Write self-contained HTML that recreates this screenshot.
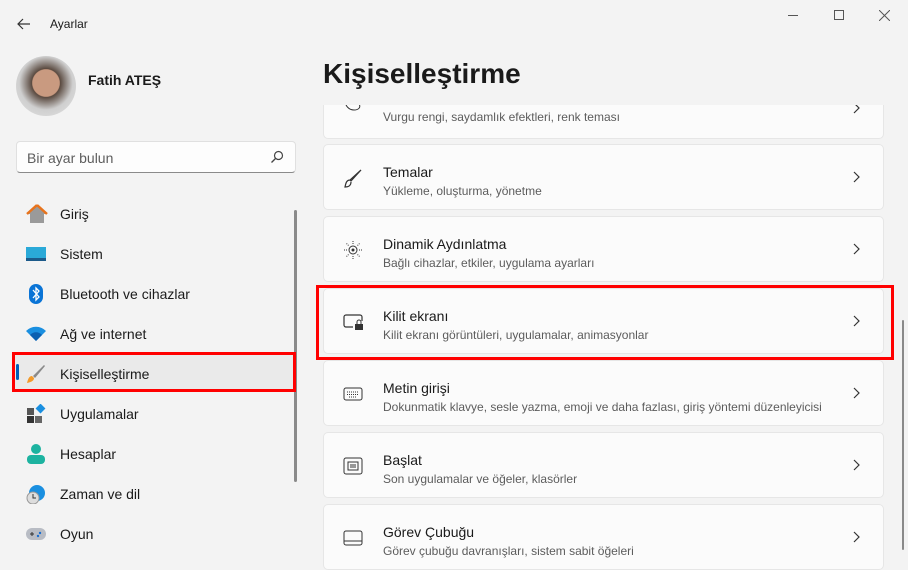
<!DOCTYPE html><html><head><meta charset="utf-8"><style>
*{box-sizing:border-box;margin:0;padding:0}
body{width:908px;height:568px;overflow:hidden;background:#f3f3f3;font-family:"Liberation Sans",sans-serif;color:#1a1a1a;position:relative}
.abs{position:absolute}
.nav{position:absolute;left:26px;height:20px;font-size:14px;display:flex;align-items:center}
.nav span{position:absolute;left:34px;white-space:nowrap}
.card{position:absolute;left:323px;width:561px;height:66px;background:#fbfbfb;border:1px solid #e6e6e6;border-radius:5px}
.card .t{position:absolute;left:59px;top:19px;font-size:14px}
.card .s{position:absolute;left:59px;top:39px;font-size:12px;color:#5c5c5c}
.card .ch{position:absolute;right:22px;top:26px}
.card .ic{position:absolute;left:19px;top:23px}
</style></head><body>
<svg class="abs" style="left:16px;top:16px" width="16" height="16"><path d="M14 8H2M7 3L2 8l5 5" stroke="#333" fill="none" stroke-width="1.2"/></svg>
<div class="abs" style="left:50px;top:17px;font-size:12px">Ayarlar</div>
<div class="abs" style="left:788px;top:15px;width:10px;height:1px;background:#555"></div>
<div class="abs" style="left:834px;top:10px;width:10px;height:10px;border:1px solid #555"></div>
<svg class="abs" style="left:879px;top:10px" width="11" height="11"><path d="M0 0L11 11M11 0L0 11" stroke="#555"/></svg>
<div class="abs" style="left:16px;top:56px;width:60px;height:60px;border-radius:50%;background:radial-gradient(circle at 50% 45%,#c99a80 0 30%,#5a4a40 32%,#cfcfcf 60%,#e5e5e5)"></div>
<div class="abs" style="left:88px;top:72px;font-size:14px;font-weight:bold">Fatih ATEŞ</div>
<div class="abs" style="left:16px;top:141px;width:280px;height:32px;background:#fdfdfd;border:1px solid #e0e0e0;border-bottom-color:#8a8a8a;border-radius:4px"></div>
<div class="abs" style="left:27px;top:150px;font-size:14px;color:#5d5d5d">Bir ayar bulun</div>
<svg class="abs" style="left:270px;top:150px" width="14" height="14"><circle cx="8.5" cy="5.5" r="4" stroke="#444" fill="none" stroke-width="1.2"/><path d="M5.5 8.5L1.5 12.5" stroke="#444" stroke-width="1.3"/></svg>
<div class="abs" style="left:294px;top:210px;width:3px;height:272px;background:#8a8a8a;border-radius:2px"></div>
<div class="abs" style="left:13px;top:353px;width:282px;height:37px;background:#eaeaea"></div>
<div class="abs" style="left:16px;top:364px;width:3px;height:16px;background:#005fb8;border-radius:2px"></div>
<div class="abs" style="left:12px;top:352px;width:284px;height:40px;border:3px solid #f00"></div>
<div class="nav" style="top:204px"><svg width="22" height="20"><path d="M11 1L1 10h3v9h14v-9h3z" fill="#9a9a9a"/><path d="M11 1L1 10M11 1l10 9" stroke="#e8731c" stroke-width="2.5"/></svg><span>Giriş</span></div>
<div class="nav" style="top:244px"><svg width="20" height="16"><rect y="1" width="20" height="12" fill="#2aa9d8"/><rect y="12" width="20" height="3" fill="#1c5a8a"/></svg><span>Sistem</span></div>
<div class="nav" style="top:284px"><svg width="20" height="20"><rect x="3" y="0" width="14" height="20" rx="7" fill="#0a74d6"/><path d="M7 6l6 7-3 3V4l3 3-6 7" stroke="#fff" fill="none" stroke-width="1.3"/></svg><span>Bluetooth ve cihazlar</span></div>
<div class="nav" style="top:324px"><svg width="20" height="16"><path d="M0 5a14 14 0 0 1 20 0L10 15z" fill="#1a8fe0"/><path d="M4 9a8 8 0 0 1 12 0L10 15z" fill="#0b5fb0"/></svg><span>Ağ ve internet</span></div>
<div class="nav" style="top:364px"><svg width="20" height="20"><path d="M18 1L7 12l2 2L19 2z" fill="#8a8a8a"/><path d="M6 12c-3 0-4 3-5 7 4-1 7-2 7-5z" fill="#f39a2a"/></svg><span>Kişiselleştirme</span></div>
<div class="nav" style="top:404px"><svg width="20" height="20"><rect x="1" y="4" width="7" height="7" fill="#555"/><rect x="1" y="12" width="7" height="7" fill="#333"/><rect x="9" y="12" width="7" height="7" fill="#666"/><rect x="11" y="1" width="7" height="7" fill="#1a8fe0" transform="rotate(45 14.5 4.5)"/></svg><span>Uygulamalar</span></div>
<div class="nav" style="top:444px"><svg width="20" height="20"><circle cx="10" cy="5" r="5" fill="#1db3a0"/><path d="M1 15a4 4 0 0 1 4-4h10a4 4 0 0 1 4 4v1a4 4 0 0 1-4 4H5a4 4 0 0 1-4-4z" fill="#1db3a0"/></svg><span>Hesaplar</span></div>
<div class="nav" style="top:484px"><svg width="20" height="20"><circle cx="11" cy="9" r="8" fill="#1a8fe0"/><circle cx="7" cy="14" r="6" fill="#ddd" stroke="#999"/><path d="M7 10v4h3" stroke="#333" fill="none"/></svg><span>Zaman ve dil</span></div>
<div class="nav" style="top:524px"><svg width="20" height="14"><rect y="1" width="20" height="12" rx="6" fill="#b8bcc4"/><path d="M4 7h4M6 5v4" stroke="#333"/><circle cx="14" cy="6" r="1.2" fill="#1a6fd0"/><circle cx="12" cy="9" r="1.2" fill="#1a6fd0"/></svg><span>Oyun</span></div>
<div class="abs" style="left:323px;top:58px;font-size:28px;font-weight:600">Kişiselleştirme</div>
<div class="abs" style="left:310px;top:105px;width:598px;height:463px;overflow:hidden">
<div class="card" style="left:13px;top:-32px"><div class="s" style="top:36px">Vurgu rengi, saydamlık efektleri, renk teması</div><svg class="ch" style="top:28px" width="8" height="12"><path d="M1 1l5 5-5 5" stroke="#333" fill="none" stroke-width="1.2"/></svg><svg class="ic" style="top:26px" width="20" height="12"><path d="M2 0c0 6 4 10 9 10s7-3 5-6" stroke="#333" fill="none"/></svg></div>
</div>
<div class="card" style="top:144px"><svg class="ic" width="20" height="20"><path d="M18 2L8 13l-1-1zM7 12c-3 0-4 2-5 7 4 0 6-2 6-5" stroke="#333" fill="none" stroke-width="1.2"/></svg><div class="t">Temalar</div><div class="s">Yükleme, oluşturma, yönetme</div><svg class="ch" width="8" height="12"><path d="M1 1l5 5-5 5" stroke="#333" fill="none" stroke-width="1.2"/></svg></div>
<div class="card" style="top:216px"><svg class="ic" width="20" height="20"><circle cx="10" cy="10" r="4" stroke="#333" fill="none"/><circle cx="10" cy="10" r="1.5" fill="#333"/><path d="M10 1v3M10 16v3M1 10h3M16 10h3M3.5 3.5l2 2M14.5 14.5l2 2M3.5 16.5l2-2M14.5 5.5l2-2" stroke="#333" stroke-dasharray="1 1"/></svg><div class="t">Dinamik Aydınlatma</div><div class="s">Bağlı cihazlar, etkiler, uygulama ayarları</div><svg class="ch" width="8" height="12"><path d="M1 1l5 5-5 5" stroke="#333" fill="none" stroke-width="1.2"/></svg></div>
<div class="card" style="top:288px"><svg class="ic" width="22" height="20"><path d="M10 15H3a2 2 0 0 1-2-2V5a2 2 0 0 1 2-2h14a2 2 0 0 1 2 2v4" stroke="#333" fill="none" stroke-width="1.2"/><rect x="12" y="12" width="8" height="6" fill="#333"/><path d="M14 12v-2a2 2 0 0 1 4 0v2" stroke="#333" fill="none"/></svg><div class="t">Kilit ekranı</div><div class="s">Kilit ekranı görüntüleri, uygulamalar, animasyonlar</div><svg class="ch" width="8" height="12"><path d="M1 1l5 5-5 5" stroke="#333" fill="none" stroke-width="1.2"/></svg></div>
<div class="abs" style="left:316px;top:285px;width:578px;height:75px;border:3px solid #f00"></div>
<div class="card" style="top:360px"><svg class="ic" width="20" height="20"><rect x="1" y="4" width="18" height="12" rx="2" stroke="#333" fill="none"/><path d="M4 8h12M4 10.5h12M6 13h8" stroke="#333" stroke-dasharray="1 1"/></svg><div class="t">Metin girişi</div><div class="s">Dokunmatik klavye, sesle yazma, emoji ve daha fazlası, giriş yöntemi düzenleyicisi</div><svg class="ch" width="8" height="12"><path d="M1 1l5 5-5 5" stroke="#333" fill="none" stroke-width="1.2"/></svg></div>
<div class="card" style="top:432px"><svg class="ic" width="20" height="20"><rect x="1" y="2" width="18" height="16" rx="2" stroke="#333" fill="none"/><rect x="5" y="6" width="10" height="8" stroke="#333" fill="none"/><path d="M7 9h6M7 11h6" stroke="#333"/></svg><div class="t">Başlat</div><div class="s">Son uygulamalar ve öğeler, klasörler</div><svg class="ch" width="8" height="12"><path d="M1 1l5 5-5 5" stroke="#333" fill="none" stroke-width="1.2"/></svg></div>
<div class="card" style="top:504px"><svg class="ic" width="20" height="20"><rect x="1" y="3" width="18" height="14" rx="2" stroke="#333" fill="none"/><path d="M1 13h18" stroke="#333"/></svg><div class="t">Görev Çubuğu</div><div class="s">Görev çubuğu davranışları, sistem sabit öğeleri</div><svg class="ch" width="8" height="12"><path d="M1 1l5 5-5 5" stroke="#333" fill="none" stroke-width="1.2"/></svg></div>
<div class="abs" style="left:902px;top:320px;width:2px;height:230px;background:#8a8a8a;border-radius:1px"></div>
</body></html>
